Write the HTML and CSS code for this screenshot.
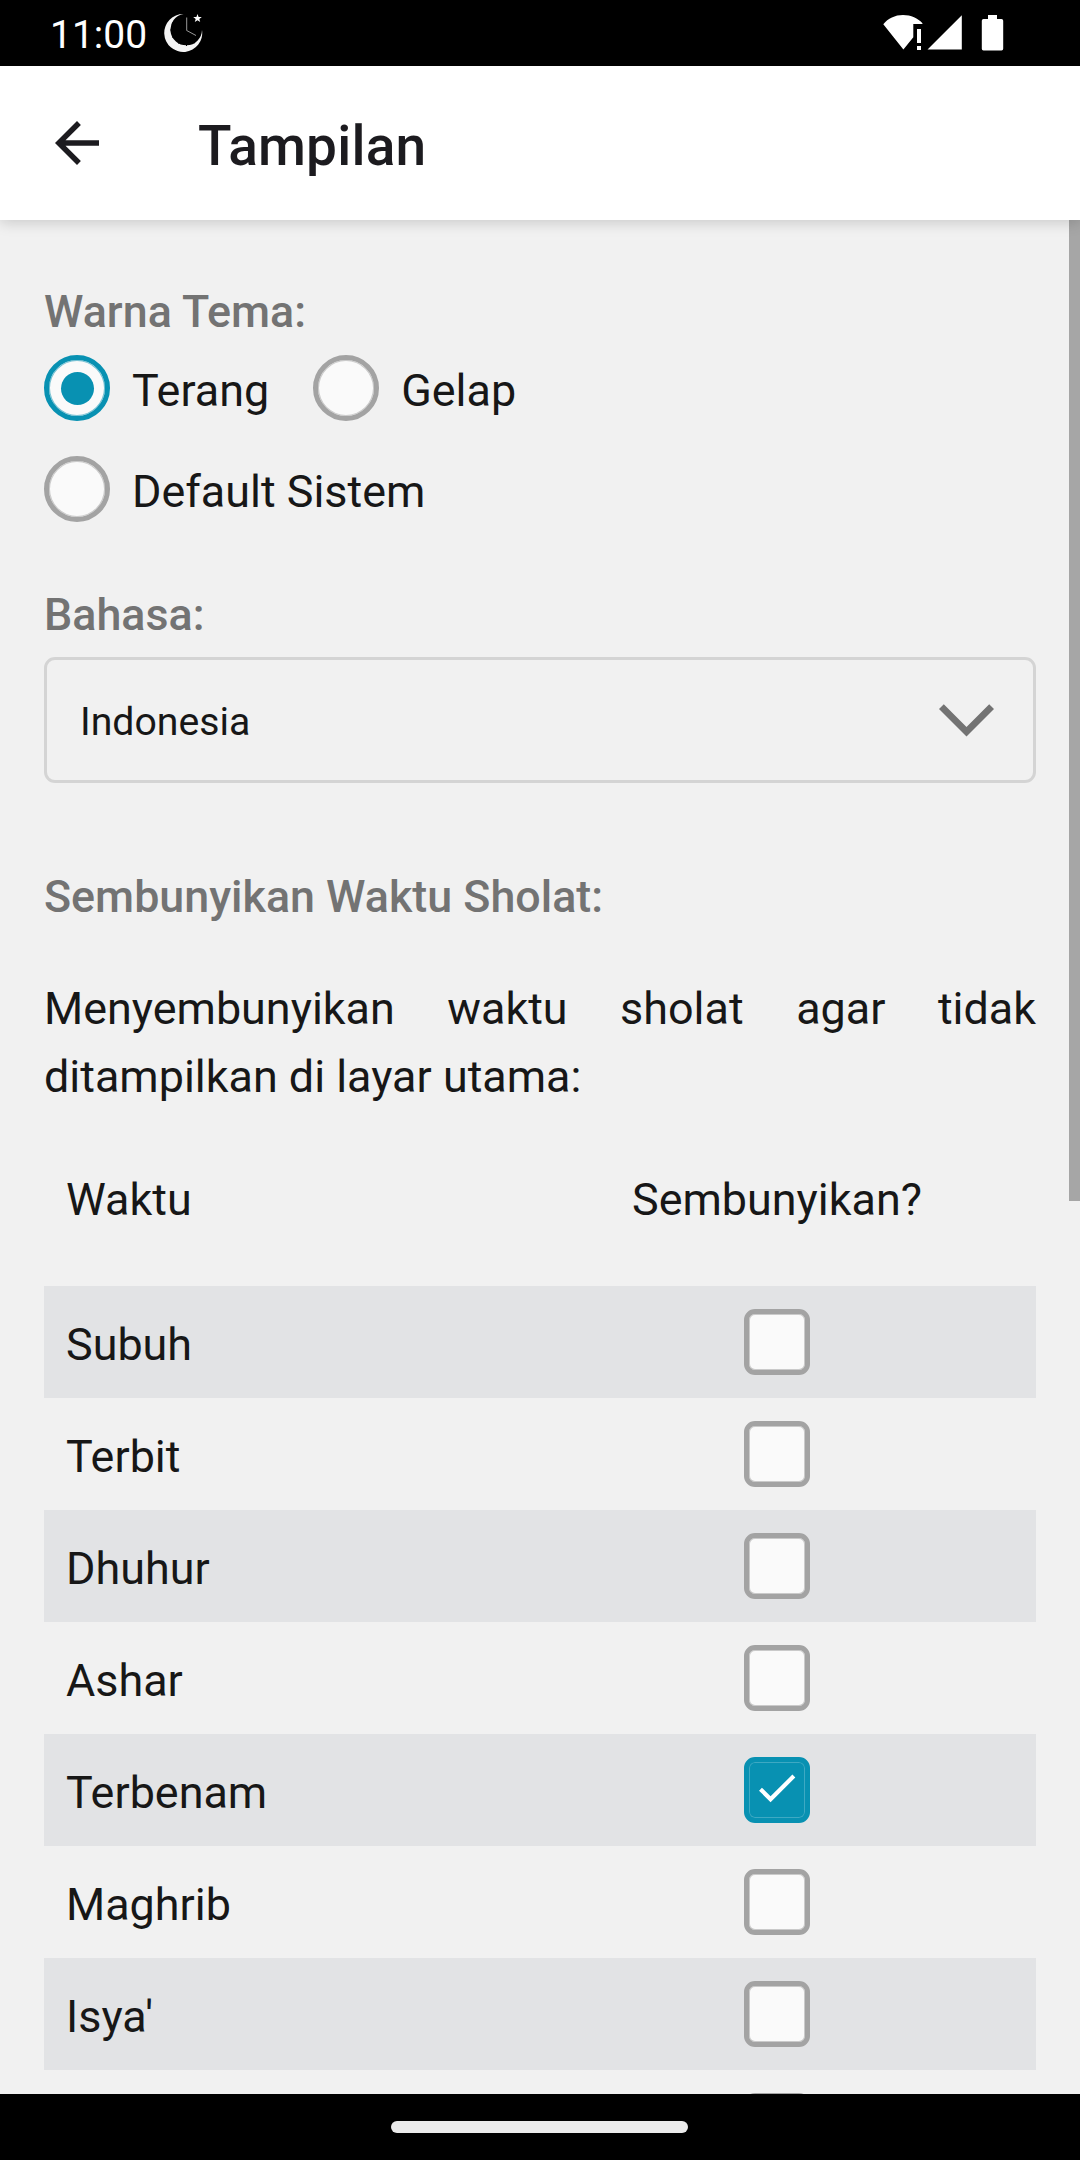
FILE: index.html
```html
<!DOCTYPE html>
<html lang="id">
<head>
<meta charset="utf-8">
<title>Tampilan</title>
<link rel="stylesheet" href="styles.css">
</head>
<body>
<div class="screen">
  <div class="status">
    <span class="clock">11:00</span>
    <svg class="moon" width="40" height="40" viewBox="0 0 40 40">
      <path fill="#f4f4f4" d="M20.500 1A19 19 0 1 0 39 17A15.800 15.800 0 1 1 20.500 1Z"/>
      <path stroke="#fff" stroke-width=".8" fill="none" opacity=".75" d="M23.700 4.500V17.500L33 22.500"/>
      <path stroke="#000" stroke-width="1" fill="none" d="M7.500 17H10M9.500 9.500l1.600 1M9.500 24.500l1.600-1M15.500 30.500l1-1.600M23.500 33v-2M31 30.500l-1-1.600M15.500 4l1 1.600"/>
      <path fill="#fff" d="M34.500 1l1.100 2.900 3.200.1-2.500 2 .9 3.100-2.700-1.800-2.700 1.800.9-3.100-2.500-2 3.200-.1z"/>
    </svg>
    <svg class="signals" width="124" height="38" viewBox="0 0 124 38" fill="#fff">
      <path d="M3.300 10.300C8 4.500 15 1.100 23 1.100S38 4.500 42.700 9.500L42 10H33.300V23.300L23.400 35.500z"/>
      <path d="M37 15h4v14h-4zM37 32h4v4h-4zM47.500 35.600L81.800 1.300V35.600z"/>
      <path d="M108 1h9v4h4.500a1.700 1.700 0 0 1 1.700 1.700V34.800a1.700 1.700 0 0 1-1.700 1.700h-18a1.700 1.700 0 0 1-1.700-1.700V6.700a1.700 1.700 0 0 1 1.700-1.700h4.500z"/>
    </svg>
  </div>
  <header class="appbar">
    <svg width="66" height="66" viewBox="0 0 24 24" fill="#1c1b1f"><path d="M20 11H7.830l5.590-5.590L12 4l-8 8 8 8 1.410-1.410L7.830 13H20v-2z"/></svg>
    <h1 class="title">Tampilan</h1>
  </header>
  <main class="content">
    <h2 class="heading theme-heading">Warna Tema:</h2>
    <div class="radios">
      <div class="option"><span class="radio radio-on"></span><span class="option-text">Terang</span></div>
      <div class="option"><span class="radio"></span><span class="option-text">Gelap</span></div>
      <div class="option"><span class="radio"></span><span class="option-text">Default Sistem</span></div>
    </div>
    <h2 class="heading language-heading">Bahasa:</h2>
    <div class="select">
      <span>Indonesia</span>
      <svg width="55" height="33" viewBox="0 0 55 33" fill="#737373"><path d="M0 5L4.800.2 27.500 22.900 50.200.2 55 5 27.500 32.500z"/></svg>
    </div>
    <h2 class="heading hide-heading">Sembunyikan Waktu Sholat:</h2>
    <p class="note">Menyembunyikan waktu sholat agar tidak ditampilkan di layar utama:</p>
    <div class="table">
      <div class="row head"><span class="cell">Waktu</span><span class="cell center">Sembunyikan?</span></div>
      <div class="row shade"><span class="cell">Subuh</span><span class="cell center"><i class="box"></i></span></div>
      <div class="row"><span class="cell">Terbit</span><span class="cell center"><i class="box"></i></span></div>
      <div class="row shade"><span class="cell">Dhuhur</span><span class="cell center"><i class="box"></i></span></div>
      <div class="row"><span class="cell">Ashar</span><span class="cell center"><i class="box"></i></span></div>
      <div class="row shade"><span class="cell">Terbenam</span><span class="cell center"><i class="box box-on"><svg class="check" viewBox="0 0 24 24" fill="#fff"><path d="M9 16.170L4.830 12l-1.420 1.410L9 19 21 7l-1.410-1.410z"/></svg></i></span></div>
      <div class="row"><span class="cell">Maghrib</span><span class="cell center"><i class="box"></i></span></div>
      <div class="row shade"><span class="cell">Isya'</span><span class="cell center"><i class="box"></i></span></div>
      <div class="row"><span class="cell"></span><span class="cell center"><i class="box"></i></span></div>
    </div>
    <div class="scrollbar"></div>
  </main>
  <div class="navbar"><div class="pill"></div></div>
</div>
</body>
</html>
```
FILE: styles.css
```css
* { box-sizing: border-box; }
body {
  margin: 0;
  font-family: Roboto, "Liberation Sans", sans-serif;
  font-size: 44.900px;
  color: #171717;
}
h1, h2, p { margin: 0; }
svg { display: block; flex: none; }

.screen {
  display: flex;
  flex-direction: column;
  width: 1080px;
  height: 2160px;
  overflow: hidden;
  background: #f1f1f1;
}

.status {
  display: flex;
  flex: none;
  align-items: flex-start;
  height: 66px;
  padding: 14px 76px 0 50px;
  background: #000;
  color: #fff;
}
.clock {
  width: 113px;
  font-size: 39px;
  line-height: 42px;
}
.moon { margin-top: -1px; }
.signals { margin-left: auto; }

.appbar {
  position: relative;
  z-index: 1;
  display: flex;
  flex: none;
  align-items: center;
  gap: 88px;
  height: 154px;
  padding: 0 44px;
  background: #fff;
  box-shadow: 0 2px 14px rgba(0, 0, 0, 0.18);
}
.title {
  padding-top: 6px;
  font-size: 55px;
  font-weight: 500;
  line-height: 66px;
  letter-spacing: 0.2px;
  color: #1c1b1f;
}

.content {
  position: relative;
  flex: 1;
  min-height: 0;
  padding: 62px 44px 0;
  overflow: hidden;
}
.heading {
  font-size: 44.800px;
  font-weight: 500;
  line-height: 60px;
  color: #737373;
}
.radios {
  display: flex;
  flex-wrap: wrap;
  gap: 35px 44px;
  width: 700px;
  margin-top: 13px;
}
.option {
  display: flex;
  gap: 22px;
  height: 66px;
}
.option-text {
  padding-top: 3px;
  line-height: 66px;
}
.radio {
  display: flex;
  align-items: center;
  justify-content: center;
  flex: none;
  width: 66px;
  height: 66px;
  border: 5px solid #a3a3a3;
  border-radius: 50%;
  background: #fafafa;
  box-shadow: inset 0 0 0 1px rgba(163, 163, 163, 0.55);
}
.radio-on {
  border-color: #0891b2;
  box-shadow: inset 0 0 0 1px rgba(8, 145, 178, 0.55);
}
.radio-on::after {
  content: "";
  width: 33px;
  height: 33px;
  border-radius: 50%;
  background: #0891b2;
}
.language-heading { margin-top: 63px; }
.select {
  display: flex;
  align-items: center;
  justify-content: space-between;
  height: 126px;
  margin-top: 12px;
  padding: 0 39px 0 33px;
  border: 3px solid #d4d4d4;
  border-radius: 11px;
  font-size: 39.200px;
}
.select span { padding-top: 3px; }
.hide-heading { margin-top: 84px; }
.note {
  margin-top: 48px;
  line-height: 68px;
  text-align: justify;
}
.table { margin-top: 40px; }
.row {
  display: grid;
  grid-template-columns: 1fr 1fr;
  align-items: center;
  height: 112px;
  padding: 0 22px;
}
.head {
  height: 135px;
  padding-bottom: 43px;
}
.shade { background: #e2e3e5; }
.cell { line-height: 66px; padding-top: 5px; }
.center {
  display: flex;
  justify-content: center;
}
.center .box { margin-top: -5px; }
.box {
  display: block;
  flex: none;
  width: 66px;
  height: 66px;
  border: 5px solid #a3a3a3;
  border-radius: 11px;
  background: #fafafa;
  box-shadow: inset 0 0 0 1px rgba(163, 163, 163, 0.55);
}
.box-on {
  border-color: #0891b2;
  background: #0891b2;
  box-shadow: inset 0 0 0 1px rgba(255, 255, 255, 0.22);
}
.check {
  width: 49.500px;
  height: 49.500px;
  margin: 1px 0 0 3px;
}

.scrollbar {
  position: absolute;
  top: 0;
  right: 0;
  width: 11px;
  height: 981px;
  background: #a6a6a6;
}

.navbar {
  display: flex;
  flex: none;
  justify-content: center;
  height: 66px;
  padding: 27px 1px 0 0;
  background: #000;
}
.pill {
  width: 297px;
  height: 12px;
  border-radius: 6px;
  background: #ebebeb;
}
```
